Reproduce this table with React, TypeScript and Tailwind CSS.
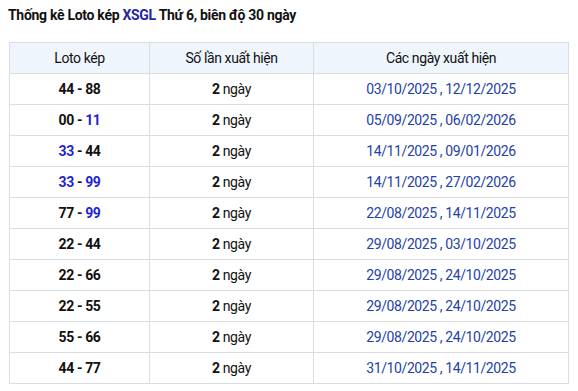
const rows: { a: string; b: string; aBlue?: boolean; bBlue?: boolean; dates: string }[] = [
  { a: "44", b: "88", dates: "03/10/2025 , 12/12/2025" },
  { a: "00", b: "11", bBlue: true, dates: "05/09/2025 , 06/02/2026" },
  { a: "33", b: "44", aBlue: true, dates: "14/11/2025 , 09/01/2026" },
  { a: "33", b: "99", aBlue: true, bBlue: true, dates: "14/11/2025 , 27/02/2026" },
  { a: "77", b: "99", bBlue: true, dates: "22/08/2025 , 14/11/2025" },
  { a: "22", b: "44", dates: "29/08/2025 , 03/10/2025" },
  { a: "22", b: "66", dates: "29/08/2025 , 24/10/2025" },
  { a: "22", b: "55", dates: "29/08/2025 , 24/10/2025" },
  { a: "55", b: "66", dates: "29/08/2025 , 24/10/2025" },
  { a: "44", b: "77", dates: "31/10/2025 , 14/11/2025" },
];

export default function App() {
  return (
    <div
      className="w-[578px] h-[391px] bg-white text-[#111] px-[9px] pt-[6px] tracking-[-0.4px]"
      style={{ fontFamily: "Roboto, 'Liberation Sans', sans-serif" }}
    >
      <h1 className="text-[14px] font-bold leading-[18px] h-[36px] -ml-px tracking-[-0.3px]">
        Thống kê Loto kép <span className="text-[#2626a3]">XSGL</span> Thứ 6, biên độ 30 ngày
      </h1>

      <table className="w-[560px] border-collapse table-fixed text-[14px] text-center">
        <colgroup>
          <col className="w-[140px]" />
          <col className="w-[164px]" />
          <col />
        </colgroup>
        <thead>
          <tr className="h-[31px] bg-[#eef5fc]">
            <th className="border border-[#dcdde1] font-normal">Loto kép</th>
            <th className="border border-[#dcdde1] font-normal">Số lần xuất hiện</th>
            <th className="border border-[#dcdde1] font-normal">Các ngày xuất hiện</th>
          </tr>
        </thead>
        <tbody>
          {rows.map((r, i) => (
            <tr key={i} className="h-[31px]">
              <td className="border border-[#dcdde1] font-bold">
                <span className={r.aBlue ? "text-[#1f1fd6]" : ""}>{r.a}</span>
                {" - "}
                <span className={r.bBlue ? "text-[#1f1fd6]" : ""}>{r.b}</span>
              </td>
              <td className="border border-[#dcdde1]">
                <b>2</b> ngày
              </td>
              <td className="border border-[#dcdde1] text-[#2342a8]">{r.dates}</td>
            </tr>
          ))}
        </tbody>
      </table>
    </div>
  );
}
